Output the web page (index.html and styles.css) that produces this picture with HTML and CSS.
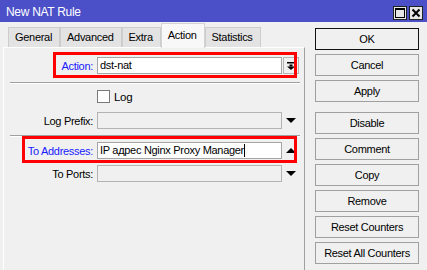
FILE: index.html
```html
<!DOCTYPE html>
<html lang="en">
  <head>
    <meta charset="UTF-8" />
    <title>New NAT Rule</title>
    <link rel="stylesheet" href="styles.css">
  </head>
  <body>
    <div class="window">
      <div class="titlebar">
        <span class="title">New NAT Rule</span>
        <div class="winbtns">
          <span class="winbtn">
            <svg width="12" height="12" viewBox="0 0 12 12"><rect x="1.5" y="1.5" width="9" height="9" fill="none" stroke="#000" stroke-width="1"/><rect x="1" y="1" width="10" height="2" fill="#000"/></svg>
          </span>
          <span class="winbtn">
            <svg width="12" height="12" viewBox="0 0 12 12"><path d="M2.5 2.5 L9.5 9.5 M9.5 2.5 L2.5 9.5" stroke="#000" stroke-width="2"/></svg>
          </span>
        </div>
      </div>

      <div class="main">
        <div class="left">
          <div class="tabs">
            <div class="tab">General</div>
            <div class="tab">Advanced</div>
            <div class="tab">Extra</div>
            <div class="tab active">Action</div>
            <div class="tab">Statistics</div>
          </div>

          <div class="page">
            <div class="row first">
              <div class="mark mark-action"></div>
              <span class="label blue">Action:</span>
              <div class="field">dst-nat</div>
              <div class="drop">
                <svg width="8" height="8" viewBox="0 0 8 8"><rect x="0" y="0" width="8" height="1.5" fill="#000"/><rect x="2.5" y="2.5" width="3" height="2" fill="#000"/><path d="M0 4.5 L8 4.5 L4 8 Z" fill="#000"/></svg>
              </div>
            </div>

            <div class="sep"></div>

            <div class="row check-row">
              <span class="label"></span>
              <span class="checkbox"></span>
              <span class="check-text">Log</span>
            </div>

            <div class="row prefix-row">
              <span class="label">Log Prefix:</span>
              <div class="field off"></div>
              <div class="arrow">
                <svg width="10" height="6" viewBox="0 0 10 6"><path d="M0 0 L10 0 L5 5 Z" fill="#000"/></svg>
              </div>
            </div>

            <div class="sep sep-two"></div>

            <div class="row addr-row">
              <div class="mark mark-addr"></div>
              <span class="label blue">To Addresses:</span>
              <div class="field">IP адрес Nginx Proxy Manager<span class="caret"></span></div>
              <div class="arrow">
                <svg width="10" height="6" viewBox="0 0 10 6"><path d="M0 5 L10 5 L5 0 Z" fill="#000"/></svg>
              </div>
            </div>

            <div class="row ports-row">
              <span class="label">To Ports:</span>
              <div class="field off"></div>
              <div class="arrow">
                <svg width="10" height="6" viewBox="0 0 10 6"><path d="M0 0 L10 0 L5 5 Z" fill="#000"/></svg>
              </div>
            </div>
          </div>
        </div>

        <div class="buttons">
          <div class="btn default">OK</div>
          <div class="btn">Cancel</div>
          <div class="btn">Apply</div>
          <div class="btn spaced">Disable</div>
          <div class="btn">Comment</div>
          <div class="btn">Copy</div>
          <div class="btn">Remove</div>
          <div class="btn">Reset Counters</div>
          <div class="btn">Reset All Counters</div>
        </div>
      </div>
    </div>
  </body>
</html>
```

FILE: styles.css
```css
body {
  margin: 0;
  font-family: "Liberation Sans", Arial, sans-serif;
  font-size: 11px;
  letter-spacing: -0.3px;
  color: #000;
  background-color: #f0f0f0;
}
.window {
  width: 427px;
  height: 270px;
  overflow: hidden;
  background-color: #f0f0f0;
}
.titlebar {
  display: flex;
  justify-content: space-between;
  align-items: center;
  height: 22px;
  padding: 0 4px 0 6px;
  background-color: #4b4fc8;
  color: #fff;
}
.title {
  font-size: 12px;
  padding-top: 1px;
}
.winbtns {
  display: flex;
  gap: 2px;
  margin-top: 3px;
}
.winbtn {
  display: flex;
  justify-content: center;
  align-items: center;
  width: 12px;
  height: 12px;
  border: 1px solid #222;
  background-color: #e6e6e6;
}
.main {
  display: flex;
}
.left {
  width: 305px;
}
.tabs {
  display: flex;
  align-items: flex-end;
  height: 25px;
  padding-left: 8px;
}
.tab {
  height: 19px;
  line-height: 19px;
  padding: 0 7px 0 6px;
  background-color: #e3e3e3;
  border: 1px solid #cdcdcd;
  border-bottom: none;
}
.tab.active {
  position: relative;
  z-index: 1;
  height: 24px;
  line-height: 22px;
  margin-bottom: -1px;
  background-color: #f8f8f8;
  border-color: #d4d4d4;
}
.page {
  position: relative;
  margin-left: 3px;
  height: 230px;
  border-top: 1px solid #fff;
  border-left: 1px solid #fff;
  border-right: 1px solid #a0a0a0;
}
.row {
  position: relative;
  display: flex;
  align-items: center;
  height: 17px;
}
.label {
  width: 89px;
  text-align: right;
  padding-right: 4px;
  flex-shrink: 0;
}
.blue {
  color: #1a1aff;
}
.field {
  width: 181px;
  height: 15px;
  line-height: 15px;
  padding-left: 2px;
  border: 1px solid #a5a5a5;
  background-color: #fff;
  white-space: nowrap;
  overflow: hidden;
}
.field.off {
  background-color: #f0f0f0;
  border-color: #b4b4b4;
}
.caret {
  display: inline-block;
  width: 1px;
  height: 13px;
  vertical-align: -3px;
  background-color: #000;
}
.drop {
  display: flex;
  justify-content: center;
  align-items: center;
  width: 14px;
  height: 15px;
  margin-left: 1px;
  border: 1px solid #b4b4b4;
  background-color: #f0f0f0;
}
.arrow {
  display: flex;
  justify-content: center;
  align-items: center;
  width: 16px;
  margin-left: 1px;
}
.mark {
  position: absolute;
  border: 3px solid #ff0000;
  pointer-events: none;
}
.mark-action {
  left: 49px;
  right: 7px;
  top: -5px;
  bottom: -4px;
}
.mark-addr {
  left: 18px;
  right: 7px;
  top: -6px;
  bottom: -4px;
}
.first {
  margin-top: 9px;
}
.sep {
  margin: 8px 4px 0 6px;
  height: 0;
  border-top: 1px solid #a0a0a0;
  border-bottom: 1px solid #fff;
}
.sep-two {
  margin-top: 6px;
}
.check-row {
  margin-top: 6px;
  height: 13px;
}
.checkbox {
  width: 11px;
  height: 11px;
  border: 1px solid #7a7a7a;
  background-color: #fff;
}
.check-text {
  margin-left: 4px;
  font-size: 11.5px;
}
.prefix-row {
  margin-top: 9px;
}
.addr-row {
  margin-top: 5px;
}
.ports-row {
  margin-top: 6px;
}
.buttons {
  display: flex;
  flex-direction: column;
  gap: 4px;
  margin-left: 10px;
  padding-top: 6px;
}
.btn {
  width: 102px;
  height: 20px;
  line-height: 20px;
  text-align: center;
  border: 1px solid #a0a0a0;
  background-color: #f0f0f0;
}
.btn.default {
  border-color: #111;
}
.btn.spaced {
  margin-top: 6px;
}
```
